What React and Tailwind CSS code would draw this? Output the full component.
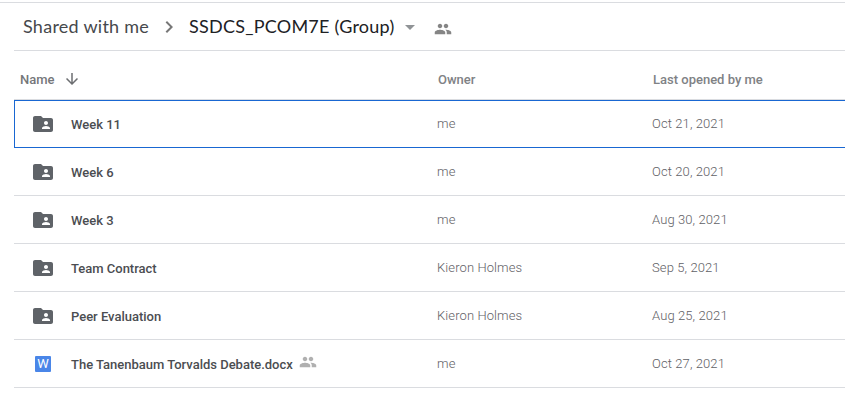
import React from "react";

const rows = [
  { name: "Week 11", owner: "me", date: "Oct 21, 2021", selected: true },
  { name: "Week 6", owner: "me", date: "Oct 20, 2021" },
  { name: "Week 3", owner: "me", date: "Aug 30, 2021" },
  { name: "Team Contract", owner: "Kieron Holmes", date: "Sep 5, 2021" },
  { name: "Peer Evaluation", owner: "Kieron Holmes", date: "Aug 25, 2021" },
  { name: "The Tanenbaum Torvalds Debate.docx", owner: "me", date: "Oct 27, 2021", doc: true, shared: true },
];

function Icon({ d, className }) {
  return (
    <svg viewBox="0 0 24 24" fill="currentColor" className={"shrink-0 " + className}>
      <path d={d} />
    </svg>
  );
}

const PEOPLE =
  "M16 11c1.66 0 2.99-1.34 2.99-3S17.66 5 16 5s-3 1.34-3 3 1.34 3 3 3zm-8 0c1.66 0 2.99-1.34 2.99-3S9.66 5 8 5 5 6.34 5 8s1.34 3 3 3zm0 2c-2.33 0-7 1.17-7 3.5V19h14v-2.5c0-2.33-4.67-3.5-7-3.5zm8 0c-.29 0-.62.02-.97.05 1.16.84 1.97 1.97 1.97 3.45V19h6v-2.5c0-2.33-4.67-3.5-7-3.5z";
const CHEVRON = "M10 6 8.59 7.41 13.17 12l-4.58 4.59L10 18l6-6z";
const DROPDOWN = "M7 10l5 5 5-5z";
const ARROW_DOWN = "M20 12l-1.41-1.41L13 16.17V4h-2v12.17l-5.58-5.59L4 12l8 8z";
const FOLDER_SHARED =
  "M20 6h-8l-2-2H4c-1.1 0-1.99.9-1.99 2L2 18c0 1.1.9 2 2 2h16c1.1 0 2-.9 2-2V8c0-1.1-.9-2-2-2zm-5 3c1.1 0 2 .9 2 2s-.9 2-2 2-2-.9-2-2 .9-2 2-2zm4 8h-8v-1c0-1.33 2.67-2 4-2s4 .67 4 2v1z";

function WordIcon() {
  return (
    <span className="ml-1 mr-1 flex h-4 w-4 shrink-0 items-center justify-center rounded-[1px] bg-[#4a86e8] text-[13px] leading-4 text-white">
      W
    </span>
  );
}

function Row({ name, owner, date, selected, doc, shared }) {
  return (
    <div
      className={
        "flex h-12 items-center border-b " +
        (selected ? "border-l border-t border-[#1967d2] pl-4" : "border-[#dadce0] pl-[17px]")
      }
    >
      <div className="flex w-[406px] shrink-0 items-center">
        {doc ? <WordIcon /> : <Icon d={FOLDER_SHARED} className="h-6 w-6 text-[#5f6368]" />}
        <span
          className={
            "ml-4 text-[13px] font-medium leading-5 tracking-[-0.01px] text-[#4b4d51] " +
            (selected ? "pt-px" : "pt-[2px]")
          }
        >
          {name}
        </span>
        {shared && <Icon d={PEOPLE} className="-mt-[3px] ml-[6px] h-[18px] w-[18px] text-[#b0b0b0]" />}
      </div>
      <div className="w-[215px] shrink-0 text-[13px] font-light leading-5 tracking-[0.1px] text-[#5f6166]">{owner}</div>
      <div className="text-[13px] font-light leading-5 tracking-[0.1px] text-[#5f6166]">{date}</div>
    </div>
  );
}

export default function App() {
  return (
    <div className="h-[404px] w-[845px] overflow-hidden bg-white pt-[2px] font-['Roboto',sans-serif]">
      <div className="border-t border-[#dadce0] pl-[14px]">
        <nav className="flex h-12 items-center border-b border-[#dadce0] pl-[9px] font-['Lato',sans-serif] text-[18px] leading-6">
          <span className="w-[126px] whitespace-nowrap pb-px tracking-[0.26px] text-[#46484c]">Shared with me</span>
          <Icon d={CHEVRON} className="ml-2 mr-2 h-6 w-6 text-[#777]" />
          <span className="w-[206px] whitespace-nowrap pb-px tracking-[0.24px] text-[#202124]">SSDCS_PCOM7E (Group)</span>
          <Icon d={DROPDOWN} className="ml-[3px] h-6 w-6 text-[#909396]" />
          <Icon d={PEOPLE} className="ml-3 mt-[4px] h-[18px] w-[18px] text-[#858585]" />
        </nav>
        <div className="flex h-[49px] items-center border-b border-[#dadce0] pl-[6px] pt-[10px] text-[13px] font-medium leading-5 text-[#808285]">
          <div className="flex w-[418px] shrink-0 items-center">
            <span className="w-[43px] text-[#75777a]">Name</span>
            <Icon d={ARROW_DOWN} className="-mt-[2px] h-[18px] w-[18px] text-[#6c6e71]" />
          </div>
          <div className="w-[215px] shrink-0">Owner</div>
          <div>Last opened by me</div>
        </div>
        {rows.map((row) => (
          <Row key={row.name} {...row} />
        ))}
      </div>
    </div>
  );
}
